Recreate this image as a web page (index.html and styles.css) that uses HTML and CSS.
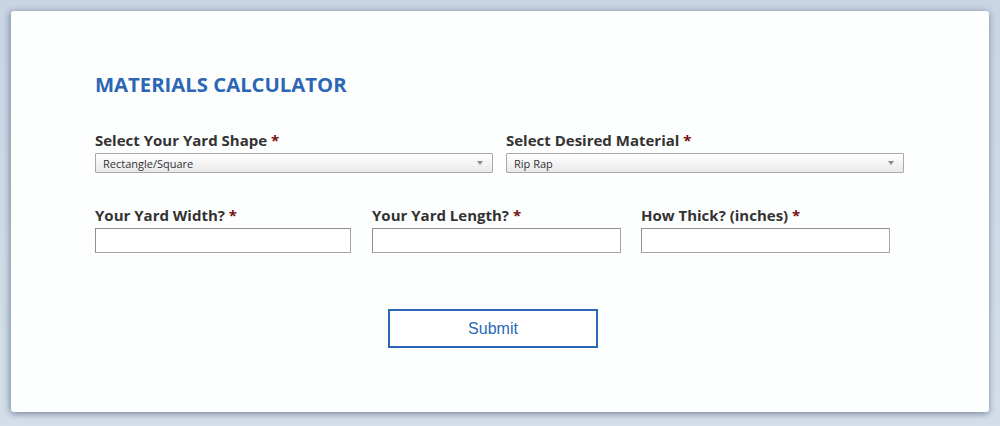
FILE: index.html
```html
<!DOCTYPE html>
<html>
<head>
<meta charset="utf-8">
<link rel="stylesheet" href="styles.css">
</head>
<body>
<div class="card">
  <h1 class="title">MATERIALS CALCULATOR</h1>
  <form class="form">
    <div class="row row-two">
      <div class="field wide">
        <label class="label">Select Your Yard Shape <span class="req">*</span></label>
        <div class="select"><span>Rectangle/Square</span><span class="arrow"></span></div>
      </div>
      <div class="field wide">
        <label class="label">Select Desired Material <span class="req">*</span></label>
        <div class="select"><span>Rip Rap</span><span class="arrow"></span></div>
      </div>
    </div>
    <div class="row row-three">
      <div class="field f1">
        <label class="label">Your Yard Width? <span class="req">*</span></label>
        <div class="input"></div>
      </div>
      <div class="field f2">
        <label class="label">Your Yard Length? <span class="req">*</span></label>
        <div class="input"></div>
      </div>
      <div class="field f3">
        <label class="label">How Thick? (inches) <span class="req">*</span></label>
        <div class="input"></div>
      </div>
    </div>
    <div class="actions">
      <button type="button" class="submit">Submit</button>
    </div>
  </form>
</div>
</body>
</html>
```

FILE: styles.css
```css
html, body {
  margin: 0;
  padding: 0;
}
body {
  width: 1000px;
  height: 426px;
  background: linear-gradient(180deg, #c9d5e3 0%, #d3deea 100%);
  padding: 11px 11px 0 11px;
  box-sizing: border-box;
  font-family: "Open Sans", "Liberation Sans", sans-serif;
}
.card {
  width: 978px;
  height: 401px;
  background: #fdfefe;
  border-radius: 3px;
  box-shadow: 0 2px 6px rgba(60, 75, 100, 0.45), -2px 0 6px rgba(60, 75, 100, 0.25);
  box-sizing: border-box;
  padding: 59px 0 0 84px;
}
.title {
  margin: 0;
  font-size: 20.3px;
  line-height: 28px;
  font-weight: 700;
  color: #2b67b4;
  letter-spacing: 0;
}
.form {
  width: 809px;
  margin-top: 32px;
}
.row {
  display: flex;
}
.row-two {
  gap: 13px;
}
.row-three {
  margin-top: 32px;
}
.field {
  display: flex;
  flex-direction: column;
}
.wide { width: 398px; }
.f1 { width: 256px; margin-right: 21px; }
.f2 { width: 249px; margin-right: 20px; }
.f3 { width: 249px; }
.label {
  font-size: 15px;
  font-weight: 700;
  line-height: 20px;
  color: #333333;
  margin-bottom: 3px;
}
.req {
  color: #760f12;
}
.select {
  height: 20px;
  box-sizing: border-box;
  border: 1px solid #a9a9a9;
  border-radius: 1px;
  background: linear-gradient(180deg, #ffffff 0%, #f2f2f2 60%, #e8e8e8 100%);
  display: flex;
  align-items: center;
  justify-content: space-between;
  padding: 0 9px 0 7px;
  font-size: 11px;
  color: #333;
}
.arrow {
  width: 0;
  height: 0;
  border-left: 3px solid transparent;
  border-right: 3px solid transparent;
  border-top: 4px solid #8a8a8a;
}
.input {
  height: 25px;
  box-sizing: border-box;
  border: 1px solid #aaa3a4;
  border-top-color: #958d8e;
  border-left-color: #958d8e;
  background: #fff;
}
.actions {
  width: 796px;
  display: flex;
  justify-content: center;
  margin-top: 56px;
}
.submit {
  width: 210px;
  height: 39px;
  box-sizing: border-box;
  border: 2px solid #2a67b6;
  background: #fff;
  color: #2a67b6;
  font-family: "Liberation Sans", Arial, sans-serif;
  font-size: 16px;
  padding: 0;
  cursor: pointer;
}
```
